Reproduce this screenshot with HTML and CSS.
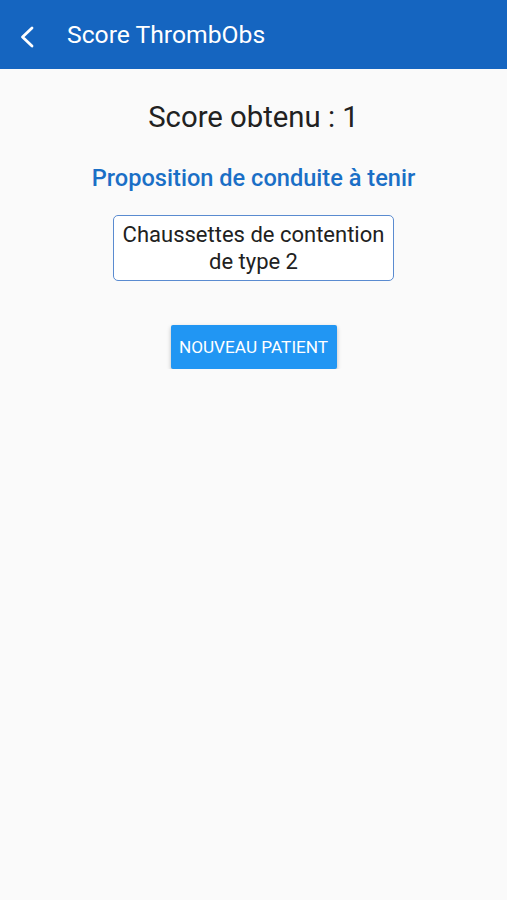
FILE: index.html
```html
<!DOCTYPE html>
<html lang="fr">
<head>
  <meta charset="UTF-8" />
  <meta name="viewport" content="width=device-width, initial-scale=1.0" />
  <title>Score ThrombObs</title>
  <link rel="stylesheet" href="styles.css">
</head>
<body>
  <header class="toolbar">
    <button class="back">
      <svg width="30" height="30" viewBox="0 0 30 30"><path d="M21 8 L11.5 17 L21 26" fill="none" stroke="#fff" stroke-width="2.8" stroke-linecap="round" stroke-linejoin="round"/></svg>
    </button>
    <h1>Score ThrombObs</h1>
  </header>

  <main class="content">
    <h2 class="score">Score obtenu : 1</h2>
    <h3 class="subtitle">Proposition de conduite à tenir</h3>
    <div class="advice">Chaussettes de contention<br>de type 2</div>
    <button class="new-patient">Nouveau patient</button>
  </main>
</body>
</html>
```

FILE: styles.css
```css
body {
  margin: 0;
  font-family: "Roboto", "Liberation Sans", sans-serif;
  background: #fafafa;
  color: #212121;
}

.toolbar {
  height: 69px;
  background: #1565c0;
  display: flex;
  align-items: center;
}

.back {
  background: transparent;
  border: none;
  padding: 0;
  margin-left: 11px;
  width: 30px;
  height: 30px;
  display: flex;
}

.toolbar h1 {
  margin: 0 0 0 26px;
  font-size: 24.7px;
  font-weight: 400;
  color: #fff;
}

.content {
  display: flex;
  flex-direction: column;
  align-items: center;
}

.score {
  margin: 31px 0 0;
  font-size: 29.3px;
  font-weight: 400;
  color: #212121;
}

.subtitle {
  margin: 30px 0 0;
  font-size: 23.6px;
  font-weight: 500;
  color: #1a6fc6;
}

.advice {
  margin-top: 23px;
  width: 279px;
  padding: 5px 0 5px;
  border: 1.5px solid #5a8bd0;
  border-radius: 5px;
  background: #fff;
  text-align: center;
  font-size: 22px;
  line-height: 27px;
  color: #212121;
}

.new-patient {
  margin-top: 44px;
  width: 166px;
  height: 44px;
  border: none;
  border-radius: 2px;
  background: #2196f3;
  color: #fff;
  font-family: inherit;
  font-size: 17.2px;
  font-weight: 400;
  text-transform: uppercase;
  box-shadow: 0 2px 4px rgba(0, 0, 0, 0.25);
}
```
